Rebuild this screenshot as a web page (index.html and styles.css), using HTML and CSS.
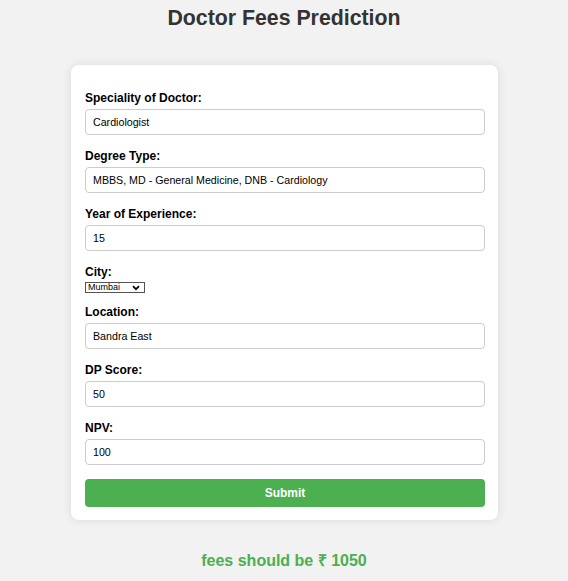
FILE: index.html
```html
<!DOCTYPE html>
<html lang="en">
<head>
<meta charset="utf-8">
<title>Doctor Fees Prediction</title>
<link rel="stylesheet" href="styles.css">
</head>
<body>
<div class="page">
  <h1 class="title">Doctor Fees Prediction</h1>
  <form class="card">
    <label class="label" for="spec">Speciality of Doctor:</label>
    <input class="field" id="spec" type="text" value="Cardiologist">

    <label class="label" for="degree">Degree Type:</label>
    <input class="field" id="degree" type="text" value="MBBS, MD - General Medicine, DNB - Cardiology">

    <label class="label" for="exp">Year of Experience:</label>
    <input class="field" id="exp" type="text" value="15">

    <label class="label label-tight" for="city">City:</label>
    <div class="select-wrap">
      <select class="select" id="city">
        <option>Mumbai</option>
      </select>
      <svg class="chev" width="8" height="6" viewBox="0 0 8 6" aria-hidden="true"><path d="M1 1.2 L4 4.2 L7 1.2" fill="none" stroke="#000" stroke-width="1.7"/></svg>
    </div>

    <label class="label" for="loc">Location:</label>
    <input class="field" id="loc" type="text" value="Bandra East">

    <label class="label" for="dp">DP Score:</label>
    <input class="field" id="dp" type="text" value="50">

    <label class="label" for="npv">NPV:</label>
    <input class="field" id="npv" type="text" value="100">

    <button class="submit" type="button">Submit</button>
  </form>
  <p class="result">fees should be ₹ 1050</p>
</div>
</body>
</html>
```

FILE: styles.css
```css
html, body {
  margin: 0;
  padding: 0;
  background: #f2f2f2;
}

body {
  font-family: "Liberation Sans", Arial, sans-serif;
  color: #000;
}

.page {
  display: flex;
  flex-direction: column;
  align-items: center;
  padding-top: 7px;
}

.title {
  margin: 0;
  font-size: 21.3px;
  line-height: 23px;
  font-weight: bold;
  color: #333;
}

.card {
  box-sizing: border-box;
  width: 427px;
  margin-top: 35px;
  margin-left: 1px;
  padding: 26px 13px 13px 14px;
  background: #fff;
  border-radius: 8px;
  box-shadow: 0 0 10px rgba(0, 0, 0, 0.1);
  display: flex;
  flex-direction: column;
  align-items: flex-start;
}

.label {
  display: block;
  font-size: 12px;
  line-height: 14px;
  font-weight: bold;
  margin-bottom: 4px;
}

.label-tight {
  margin-bottom: 3px;
}

.field {
  box-sizing: border-box;
  width: 400px;
  height: 26px;
  margin: 0 0 14px 0;
  padding: 0 7px;
  border: 1px solid #ccc;
  border-radius: 4px;
  font-family: "Liberation Sans", Arial, sans-serif;
  font-size: 10.67px;
  color: #000;
  background: #fff;
}

.select-wrap {
  position: relative;
  width: 60px;
  height: 11px;
  margin-bottom: 12px;
}

.select {
  -webkit-appearance: none;
  appearance: none;
  display: block;
  box-sizing: border-box;
  width: 60px;
  height: 11px;
  margin: 0;
  padding: 0 0 0 2px;
  border: 1px solid #555;
  border-radius: 0;
  background: #fff;
  font-family: "Liberation Sans", Arial, sans-serif;
  font-size: 9px;
  line-height: 9px;
  color: #000;
}

.chev {
  position: absolute;
  right: 5px;
  top: 3px;
  pointer-events: none;
}

.submit {
  width: 400px;
  height: 28px;
  margin: 0;
  border: none;
  border-radius: 4px;
  background: #4caf50;
  color: #fff;
  font-family: "Liberation Sans", Arial, sans-serif;
  font-size: 12px;
  font-weight: bold;
  cursor: pointer;
}

.result {
  margin: 31px 0 0 0;
  font-size: 16px;
  line-height: 19px;
  font-weight: bold;
  color: #4caf50;
}
```
